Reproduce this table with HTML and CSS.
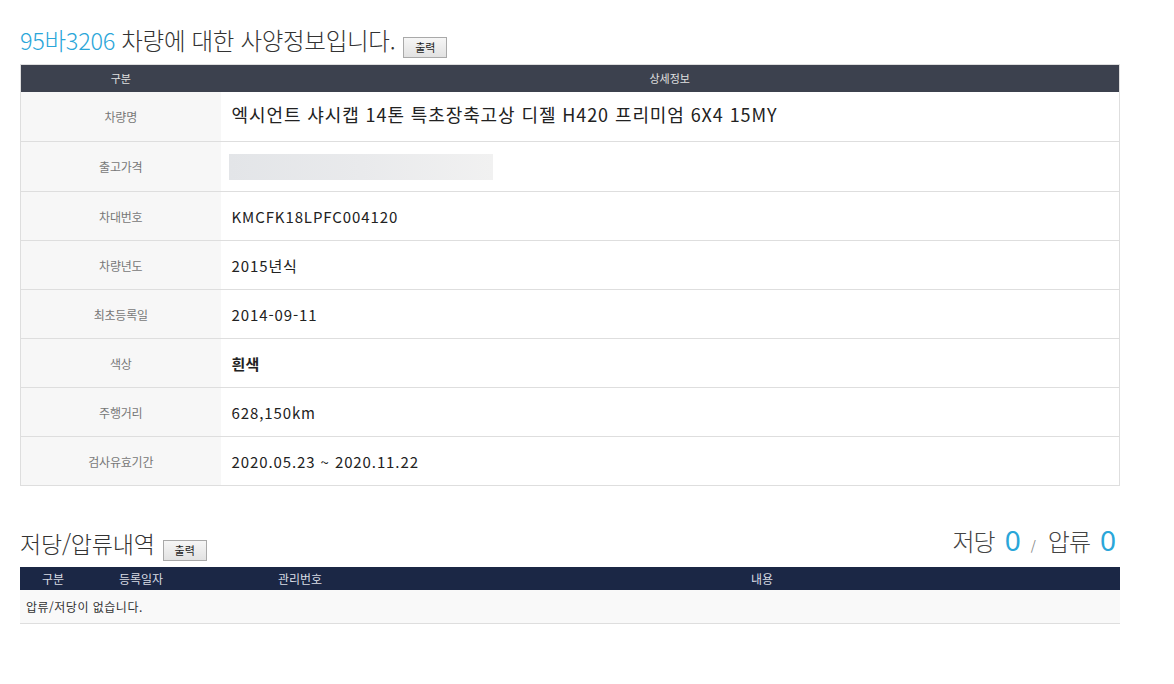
FILE: index.html
```html
<!DOCTYPE html>
<html lang="ko">
<head>
<meta charset="utf-8">
<link rel="stylesheet" href="styles.css">
</head>
<body>
<div class="page">
  <div class="title-line">
    <h2 class="title"><span class="plate">95바3206</span> 차량에 대한 사양정보입니다.</h2>
    <button class="btn">출력</button>
  </div>
  <table class="spec">
    <thead>
      <tr><th class="c-label">구분</th><th>상세정보</th></tr>
    </thead>
    <tbody>
      <tr><td class="label">차량명</td><td class="val big">엑시언트 샤시캡 14톤 특초장축고상 디젤 H420 프리미엄 6X4 15MY</td></tr>
      <tr class="tall"><td class="label">출고가격</td><td class="val"><div class="blur"></div></td></tr>
      <tr><td class="label">차대번호</td><td class="val">KMCFK18LPFC004120</td></tr>
      <tr><td class="label">차량년도</td><td class="val">2015년식</td></tr>
      <tr><td class="label">최초등록일</td><td class="val">2014-09-11</td></tr>
      <tr><td class="label">색상</td><td class="val bold">흰색</td></tr>
      <tr><td class="label">주행거리</td><td class="val">628,150km</td></tr>
      <tr><td class="label">검사유효기간</td><td class="val">2020.05.23 ~ 2020.11.22</td></tr>
    </tbody>
  </table>

  <div class="sec2-head">
    <div class="title-line">
      <h2 class="title t2">저당/압류내역</h2>
      <button class="btn">출력</button>
    </div>
    <div class="counts">
      <span class="cl">저당</span><span class="num">0</span><span class="sep">/</span><span class="cl">압류</span><span class="num">0</span>
    </div>
  </div>
  <table class="lien">
    <thead>
      <tr><th class="l1">구분</th><th class="l2">등록일자</th><th class="l3">관리번호</th><th>내용</th></tr>
    </thead>
    <tbody>
      <tr><td colspan="4" class="empty">압류/저당이 없습니다.</td></tr>
    </tbody>
  </table>
</div>
</body>
</html>
```

FILE: styles.css
```css
* { box-sizing: border-box; }
body {
  margin: 0;
  background: #fff;
  font-family: "Noto Sans CJK KR", "Noto Sans", sans-serif;
  color: #222;
}
.page {
  width: 1140px;
  padding: 24px 20px 0 20px;
}
.title-line {
  display: flex;
  align-items: flex-end;
  gap: 8px;
}
.title {
  margin: 0;
  font-size: 23.5px;
  font-weight: 300;
  line-height: 32px;
  letter-spacing: -0.3px;
  color: #333;
}
.title.t2 { letter-spacing: -0.2px; font-size: 23px; }
.plate { color: #2aa6d9; }
.btn {
  font-family: "Noto Sans CJK KR", sans-serif;
  font-size: 11px;
  line-height: 17px;
  height: 21px;
  width: 44px;
  padding: 0;
  margin-bottom: -2px;
  background: linear-gradient(#f6f6f6, #e2e2e2);
  border: 1px solid #a9a9a9;
  color: #222;
  border-radius: 0;
}
table {
  border-collapse: collapse;
  width: 1100px;
}
.spec { margin-top: 8px; border: 1px solid #dedede; }
.spec th {
  background: #3c414e;
  color: #e0e0e0;
  font-size: 11px;
  font-weight: 400;
  height: 27px;
  padding: 0;
}
.spec .c-label { width: 200px; }
.spec td {
  height: 49px;
  border-bottom: 1px solid #dedede;
  padding: 0;
}
.spec tbody tr:first-child td { height: 50px; }
.spec tr.tall td { height: 50px; }
.spec .label {
  background: #f7f7f7;
  text-align: center;
  font-size: 12px;
  color: #777;
  letter-spacing: -0.2px;
}
.spec .val {
  padding-left: 11px;
  font-size: 15px;
  color: #222;
  letter-spacing: 0.9px;
}
.spec .val.big { font-size: 18px; letter-spacing: 0.9px; padding-bottom: 4px; }
.spec .val.bold { font-weight: 700; letter-spacing: 0.3px; }
.blur {
  width: 264px;
  height: 26px;
  margin-left: -3px;
  background: linear-gradient(90deg, #e3e5e8 0%, #e9eaec 50%, #f1f1f1 100%);
}
.sec2-head {
  margin-top: 35px;
  width: 1100px;
  display: flex;
  justify-content: space-between;
  align-items: flex-end;
}
.counts {
  display: flex;
  align-items: baseline;
  padding-right: 4px;
  color: #444;
}
.counts .cl { font-size: 24px; letter-spacing: -1px; font-weight: 300; }
.counts .num { font-size: 28px; color: #2aa6d9; margin-left: 10px; font-family: "Noto Sans", sans-serif; }
.counts .sep { font-size: 13px; color: #888; margin: 0 12px 0 10px; }
.lien { margin-top: 8px; }
.lien th {
  background: #1b2745;
  color: #d8dce4;
  font-size: 12px;
  font-weight: 400;
  height: 23px;
  padding: 0;
}
.lien .l1 { width: 66px; }
.lien .l2 { width: 110px; }
.lien .l3 { width: 208px; }
.lien td.empty {
  background: #f9f9f9;
  height: 33px;
  font-size: 12px;
  letter-spacing: 0.5px;
  color: #333;
  padding-left: 6px;
  border-bottom: 1px solid #dedede;
}
```
